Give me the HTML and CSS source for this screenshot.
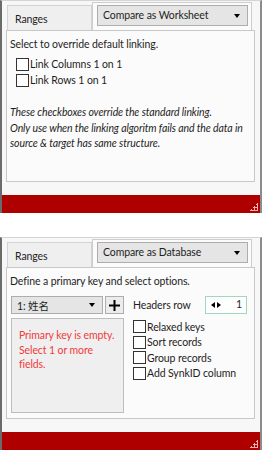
FILE: index.html
```html
<!DOCTYPE html>
<html lang="en">
<head>
    <meta charset="UTF-8">
    <title>Compare options</title>
    <link rel="stylesheet" href="styles.css">
</head>
<body>
    <div class="window">
        <div class="tabs">
            <div class="tab">Ranges</div>
            <div class="tab active">
                <div class="combo">Compare as Worksheet<span class="arrow"></span></div>
            </div>
        </div>
        <div class="page">
            <p class="intro">Select to override default linking.</p>
            <div class="checks">
                <label class="check"><span class="box"></span>Link Columns 1 on 1</label>
                <label class="check"><span class="box"></span>Link Rows 1 on 1</label>
            </div>
            <p class="note">These checkboxes override the standard linking.<br>Only use when the linking algoritm fails and the data in<br>source &amp; target has same structure.</p>
        </div>
        <div class="footer"><span class="grip"></span></div>
    </div>

    <div class="window">
        <div class="tabs">
            <div class="tab">Ranges</div>
            <div class="tab active">
                <div class="combo">Compare as Database<span class="arrow"></span></div>
            </div>
        </div>
        <div class="page">
            <p class="intro">Define a primary key and select options.</p>
            <div class="db-grid">
                <div class="key-col">
                    <div class="key-row">
                        <div class="combo small">1: 姓名<span class="arrow"></span></div>
                        <div class="plus">
                            <svg width="13" height="13" viewBox="0 0 13 13"><path d="M6.5 1v11M1 6.5h11" stroke="#000" stroke-width="2"/></svg>
                        </div>
                    </div>
                    <div class="key-box">Primary key is empty.<br>Select 1 or more<br>fields.</div>
                </div>
                <div class="opt-col">
                    <div class="headers">
                        <span>Headers row</span>
                        <div class="spin"><span class="tri left"></span><span class="tri right"></span><span class="num">1</span></div>
                    </div>
                    <label class="check"><span class="box"></span>Relaxed keys</label>
                    <label class="check"><span class="box"></span>Sort records</label>
                    <label class="check"><span class="box"></span>Group records</label>
                    <label class="check"><span class="box"></span>Add SynkID column</label>
                </div>
            </div>
        </div>
        <div class="footer"><span class="grip"></span></div>
    </div>
</body>
</html>
```

FILE: styles.css
```css
body {
    margin: 0;
    font-family: Lato, "Noto Sans CJK SC", sans-serif;
    font-size: 10.5px;
    letter-spacing: -0.1px;
    color: #1e1e1e;
    background: #fff;
}
p {
    margin: 0;
}
.window {
    height: 213px;
    box-sizing: border-box;
    border-left: 2px solid #6b6b6b;
    border-right: 2px solid #8c8c8c;
    border-top: 1px solid #d4d4d4;
    background: #f7f7f7;
    display: flex;
    flex-direction: column;
}
.window + .window {
    margin-top: 24px;
}
.tabs {
    display: flex;
    align-items: flex-end;
    height: 29px;
    padding-left: 5px;
}
.tab {
    width: 85px;
    height: 25px;
    box-sizing: border-box;
    border: 1px solid #d2d2d2;
    border-bottom: none;
    background: #efefef;
    padding: 7px 0 0 7px;
}
.tab.active {
    width: 160px;
    height: 28px;
    background: #fbfbfb;
    border-color: #cdcdcd;
    padding: 2px 3px 0 4px;
}
.combo {
    position: relative;
    height: 21px;
    box-sizing: border-box;
    border: 1px solid #adadad;
    background: #e5e5e5;
    padding: 3px 0 0 5px;
}
.arrow {
    position: absolute;
    right: 7px;
    top: 8px;
    border-left: 3px solid transparent;
    border-right: 3px solid transparent;
    border-top: 4px solid #000;
}
.page {
    height: 152px;
    margin: 0 5px 0 4px;
    box-sizing: border-box;
    border: 1px solid #c8c8c8;
    background: #fbfbfb;
    padding: 6px 3px 0 3px;
}
.intro {
    line-height: 15px;
}
.checks {
    margin-top: 4px;
    padding-left: 6px;
}
.check {
    display: flex;
    align-items: center;
    height: 16px;
}
.box {
    width: 11px;
    height: 11px;
    border: 1px solid #333;
    background: #fff;
    margin-right: 1px;
}
.note {
    margin-top: 17px;
    font-style: italic;
    line-height: 15.5px;
    white-space: nowrap;
}
.footer {
    margin-top: auto;
    height: 18px;
    background: #af0000;
    position: relative;
}
.grip {
    position: absolute;
    right: 2px;
    bottom: 2px;
    width: 8px;
    height: 8px;
    background:
        radial-gradient(circle, #f2b0b0 1px, transparent 1.2px) 6px 0 / 3px 3px no-repeat,
        radial-gradient(circle, #f2b0b0 1px, transparent 1.2px) 3px 3px / 3px 3px no-repeat,
        radial-gradient(circle, #f2b0b0 1px, transparent 1.2px) 6px 3px / 3px 3px no-repeat,
        radial-gradient(circle, #f2b0b0 1px, transparent 1.2px) 0 6px / 3px 3px no-repeat,
        radial-gradient(circle, #f2b0b0 1px, transparent 1.2px) 3px 6px / 3px 3px no-repeat,
        radial-gradient(circle, #f2b0b0 1px, transparent 1.2px) 6px 6px / 3px 3px no-repeat;
}
.db-grid {
    display: flex;
    gap: 9px;
    margin-top: 7px;
    padding-left: 1px;
}
.key-col {
    width: 113px;
}
.key-row {
    display: flex;
    gap: 2px;
}
.combo.small {
    width: 92px;
    height: 18px;
    padding: 1px 0 0 5px;
}
.combo.small .arrow {
    top: 6px;
}
.plus {
    width: 19px;
    height: 18px;
    box-sizing: border-box;
    border: 1px solid #adadad;
    background: #ececec;
    display: flex;
    align-items: center;
    justify-content: center;
}
.key-box {
    margin-top: 4px;
    height: 95px;
    box-sizing: border-box;
    border: 1px solid #bdbdbd;
    background: #efefef;
    color: #f23a3a;
    padding: 9px 4px 0 7px;
    line-height: 14.5px;
    white-space: nowrap;
}
.opt-col {
    flex: 1;
}
.headers {
    display: flex;
    align-items: center;
    justify-content: space-between;
    height: 18px;
    margin-bottom: 5px;
    padding-right: 4px;
}
.spin {
    position: relative;
    width: 42px;
    height: 18px;
    box-sizing: border-box;
    border: 1px solid #9fd8bd;
    background: #fff;
}
.tri {
    position: absolute;
    top: 5px;
    border-top: 3px solid transparent;
    border-bottom: 3px solid transparent;
}
.tri.left {
    left: 5px;
    border-right: 4px solid #000;
}
.tri.right {
    left: 11px;
    border-left: 4px solid #000;
}
.num {
    position: absolute;
    right: 4px;
    top: 1px;
}
.opt-col .check {
    height: 15.5px;
}
```
